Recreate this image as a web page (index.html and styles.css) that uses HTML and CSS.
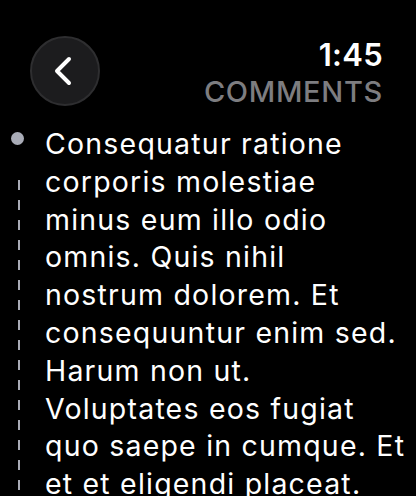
FILE: index.html
```html
<!DOCTYPE html>
<html>
    <head>
        <title>Comments</title>
        <meta name="viewport" content="width=device-width, initial-scale=1.0">
        <link rel="stylesheet" href="styles.css">
    </head>
    <body>
        <div class="screen">
            <div class="header">
                <button class="back">
                    <svg width="20" height="30" viewBox="0 0 20 30">
                        <path d="M16 3 L4 15 L16 27" fill="none" stroke="#fff" stroke-width="4" stroke-linecap="round" stroke-linejoin="round"/>
                    </svg>
                </button>
                <div class="title">
                    <div class="time">1:45</div>
                    <div class="label">COMMENTS</div>
                </div>
            </div>
            <div class="comment">
                <div class="rail">
                    <span class="dot"></span>
                    <span class="line"></span>
                </div>
                <p class="text">Consequatur ratione corporis molestiae minus eum illo odio omnis. Quis nihil nostrum dolorem. Et consequuntur enim sed. Harum non ut. Voluptates eos fugiat quo saepe in cumque. Et et et eligendi placeat.</p>
            </div>
        </div>
    </body>
</html>
```

FILE: styles.css
```css
body {
    margin: 0;
    background-color: #000;
    color: #fff;
    font-family: Inter, "Noto Sans", sans-serif;
    overflow: hidden;
}

.screen {
    height: 496px;
    overflow: hidden;
}

.header {
    display: flex;
    justify-content: space-between;
    align-items: flex-start;
    padding: 36px 33px 0 30px;
}

.back {
    width: 70px;
    height: 70px;
    border-radius: 50%;
    background-color: #1c1c1e;
    border: 2px solid #2e2e30;
    display: flex;
    align-items: center;
    justify-content: center;
    padding: 0;
    padding-right: 4px;
}

.title {
    text-align: right;
}

.time {
    font-size: 31px;
    font-weight: 600;
    line-height: 38px;
    letter-spacing: 0.3px;
}

.label {
    font-size: 29px;
    font-weight: 500;
    line-height: 36px;
    letter-spacing: 0.7px;
    color: #7d7d80;
}

.comment {
    display: flex;
    padding: 15px 8px 0 11px;
}

.rail {
    width: 34px;
    flex-shrink: 0;
    display: flex;
    flex-direction: column;
    align-items: flex-start;
    padding-top: 7px;
}

.dot {
    width: 13px;
    height: 13px;
    border-radius: 50%;
    background-color: #a9acb7;
}

/* dashed thread under the bullet: 10px dash, 10px gap */
.line {
    width: 2px;
    margin-left: 7px;
    margin-top: 35px;
    height: 400px;
    background-image: linear-gradient(#a9acb7 10px, transparent 10px);
    background-size: 2px 20px;
}

.text {
    margin: 0;
    font-size: 28.5px;
    line-height: 37.8px;
    letter-spacing: 1.2px;
}
```
